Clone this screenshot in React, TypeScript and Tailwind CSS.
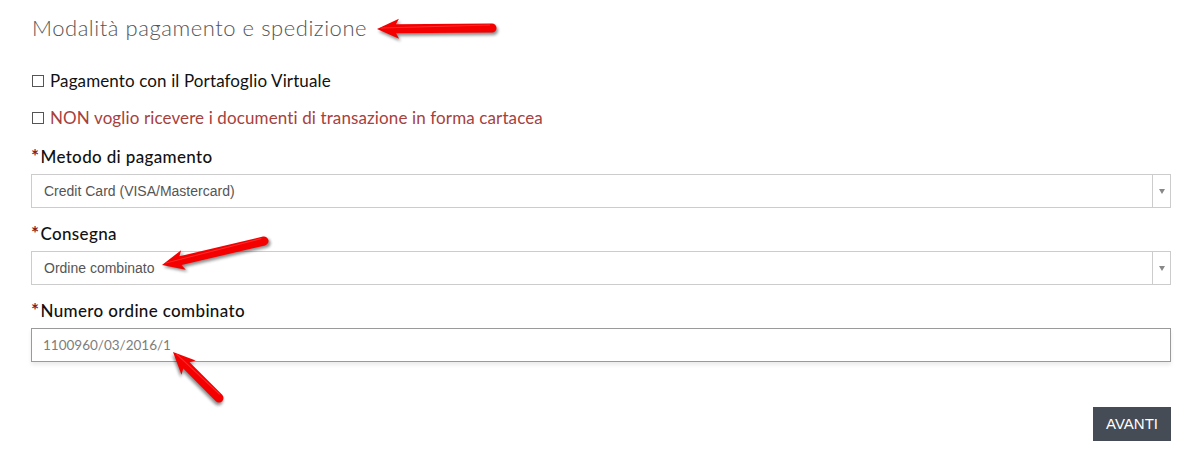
import type { ReactNode } from "react";

type Pt = [number, number];

// red annotation arrow, drawn from tip to tail
function Arrow({ tip, tail }: { tip: Pt; tail: Pt }) {
  const dx = tail[0] - tip[0];
  const dy = tail[1] - tip[1];
  const len = Math.sqrt(dx * dx + dy * dy);
  const ang = (Math.atan2(dy, dx) * 180) / Math.PI;
  const d = `M0,0 L22,-10 L19,-4.5 L${len},-4.5 A4.5,4.5 0 0 1 ${len},4.5 L19,4.5 L22,10 Z`;
  return (
    <g transform={`translate(${tip[0]},${tip[1]}) rotate(${ang})`}>
      <path d={d} fill="#000" opacity={0.45} transform="translate(1.5,2.5)" filter="url(#blur)" />
      <path d={d} fill="#f40000" />
      <path d={`M4,-1 L${len - 2},-3`} stroke="#ff5a5a" strokeWidth={1} opacity={0.5} />
    </g>
  );
}

function Label({ children }: { children: ReactNode }) {
  return (
    <div className="flex items-start text-[17px] leading-[20px] font-medium text-[#111] tracking-[0.35px]">
      <span className="text-[#8b1c1c] text-[19px] leading-[18px] font-bold mr-[1px]">*</span>
      {children}
    </div>
  );
}

function Select({ value }: { value: string }) {
  return (
    <div className="flex h-[34px] border border-[#cccccc] bg-white">
      <div className="flex-1 flex items-center pl-[12px] text-[14px] text-[#555] font-['Liberation_Sans',Arial,sans-serif]">
        {value}
      </div>
      <div className="w-[18px] border-l border-[#cccccc] flex items-center justify-center">
        <div className="w-0 h-0 border-l-[3.5px] border-r-[3.5px] border-t-[5px] border-l-transparent border-r-transparent border-t-[#888]" />
      </div>
    </div>
  );
}

function Check({ children, red }: { children: ReactNode; red?: boolean }) {
  return (
    <label className={`flex items-center gap-[6px] text-[17px] leading-[20px] tracking-[0.12px] ${red ? "text-[#a8403c]" : "text-[#111]"}`}>
      <span className="w-[12px] h-[12px] border border-[#555] bg-white" />
      {children}
    </label>
  );
}

export default function App() {
  return (
    <div className="relative w-[1193px] h-[468px] bg-white font-['Lato','Noto_Sans',sans-serif] overflow-hidden">
      <div className="pl-[31px] pr-[22px] pt-[14px]">
        <h2 className="text-[22px] leading-[28px] font-light text-[#555] pl-[1px] tracking-[0.55px]">
          Modalità pagamento e spedizione
        </h2>

        <div className="mt-[29px] pl-[1px] flex flex-col gap-[17px]">
          <Check>Pagamento con il Portafoglio Virtuale</Check>
          <Check red>NON voglio ricevere i documenti di transazione in forma cartacea</Check>
        </div>

        <div className="mt-[19px]">
          <Label>Metodo di pagamento</Label>
          <div className="mt-[7px]">
            <Select value="Credit Card (VISA/Mastercard)" />
          </div>
        </div>

        <div className="mt-[16px]">
          <Label>Consegna</Label>
          <div className="mt-[7px]">
            <Select value="Ordine combinato" />
          </div>
        </div>

        <div className="mt-[16px]">
          <Label>Numero ordine combinato</Label>
          <div className="mt-[7px] h-[34px] border border-[#9a9a9a] bg-white flex items-center pl-[11px] text-[13.5px] text-[#7d7d7d] shadow-[0_3px_4px_rgba(0,0,0,0.08)]">
            1100960/03/2016/1
          </div>
        </div>

        <div className="mt-[45px] flex justify-end">
          <button
            type="button"
            className="w-[78px] h-[34px] bg-[#454c55] text-white text-[15px] font-['Liberation_Sans',Arial,sans-serif]"
          >
            AVANTI
          </button>
        </div>
      </div>

      <svg className="absolute inset-0 pointer-events-none" width={1193} height={468}>
        <defs>
          <filter id="blur" x="-20%" y="-50%" width="140%" height="200%">
            <feGaussianBlur stdDeviation="1.5" />
          </filter>
        </defs>
        <Arrow tip={[377, 29]} tail={[492, 28]} />
        <Arrow tip={[162, 265]} tail={[264, 241]} />
        <Arrow tip={[173, 352]} tail={[219, 398]} />
      </svg>
    </div>
  );
}
